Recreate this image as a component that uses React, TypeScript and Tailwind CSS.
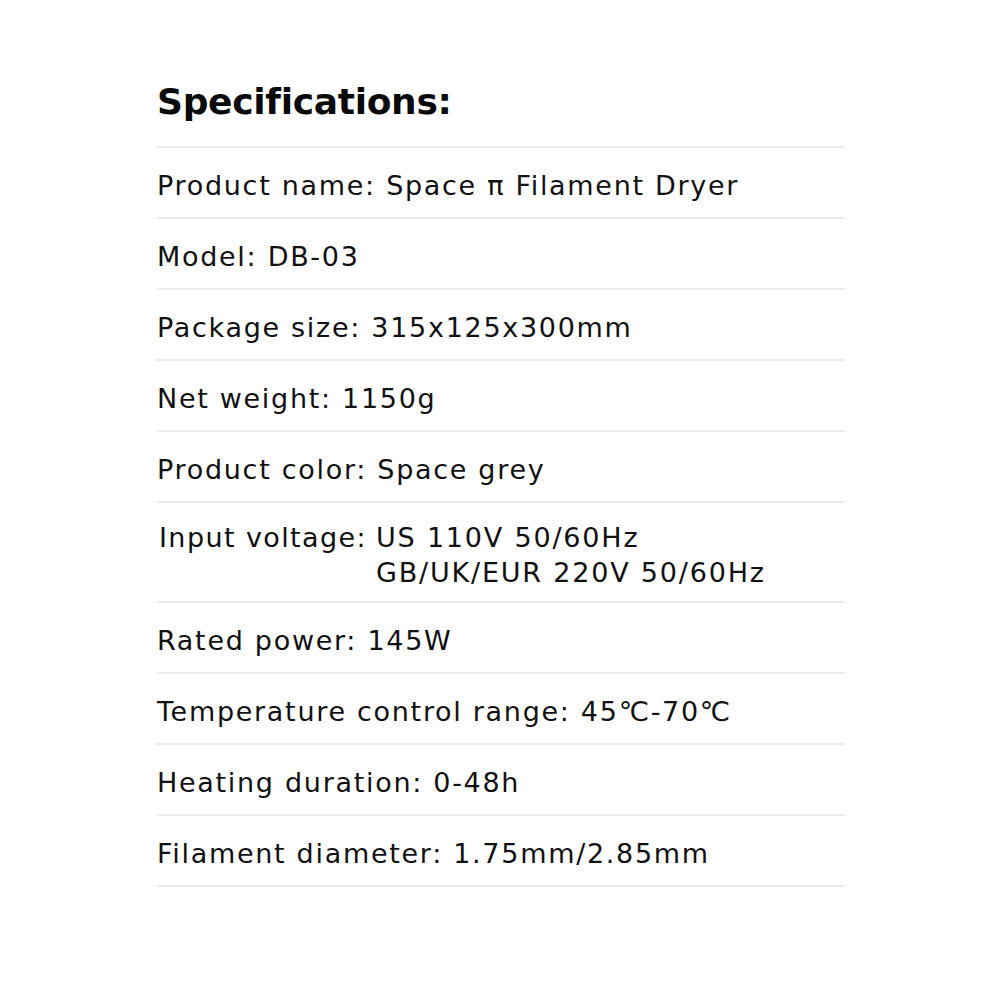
import React from "react";

const rows: string[] = [
  "Product name: Space π Filament Dryer",
  "Model: DB-03",
  "Package size: 315x125x300mm",
  "Net weight: 1150g",
  "Product color: Space grey",
];
const rows2: string[] = [
  "Rated power: 145W",
  "Temperature control range: 45℃-70℃",
  "Heating duration: 0-48h",
  "Filament diameter: 1.75mm/2.85mm",
];

function Row({ text }: { text: string }) {
  return (
    <div className="h-[71px] border-b-2 border-[#ebebeb] flex items-center pt-[5px]">
      <span className="text-[27px] leading-none text-[#111] tracking-[1.7px]">{text}</span>
    </div>
  );
}

export default function App() {
  return (
    <div className="w-[1000px] h-[1000px] bg-white" style={{ fontFamily: '"DejaVu Sans", sans-serif' }}>
      <div className="ml-[157px] w-[688px] pt-[84px]">
        <h1 className="text-[36px] font-bold leading-none text-[#0a0a0a] pb-[26px] border-b-2 border-[#ebebeb] tracking-[-0.3px]">
          Specifications:
        </h1>
        {rows.map((r) => (
          <Row key={r} text={r} />
        ))}
        <div className="h-[100px] border-b-2 border-[#ebebeb] flex items-center pt-[6px]">
          <div className="flex text-[27px] leading-[35px] text-[#111]">
            <span className="pl-[2px] w-[219px] whitespace-nowrap tracking-[1.4px]">Input voltage:</span>
            <div className="flex flex-col tracking-[1.8px]">
              <span>US 110V 50/60Hz</span>
              <span>GB/UK/EUR 220V 50/60Hz</span>
            </div>
          </div>
        </div>
        {rows2.map((r) => (
          <Row key={r} text={r} />
        ))}
      </div>
    </div>
  );
}
